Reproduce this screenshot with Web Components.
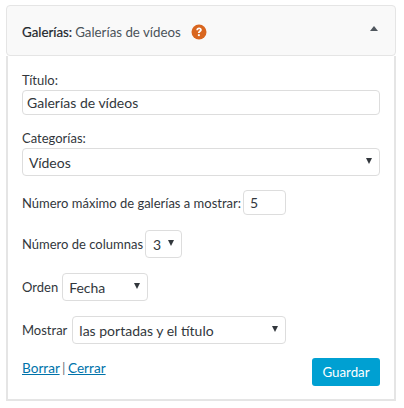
<!DOCTYPE html>
<html lang="es">
<head>
<meta charset="utf-8">
<title>Galerías</title>
<style>
  html, body { margin: 0; background: #fff; }
  body { padding: 5px 0 0 6px; font-family: Lato, "Open Sans", sans-serif; font-size: 13px; color: #32373c; }
</style>
</head>
<body>
<gal-widget heading="Galerías:" title-text="Galerías de vídeos">
  <gal-row stack gap="1" bottom="14">
    <span>Título:</span>
    <gal-box full height="25" pad="4">Galerías de vídeos</gal-box>
  </gal-row>
  <gal-row stack gap="1" bottom="14">
    <span>Categorías:</span>
    <gal-box full height="28" pad="6" arrow>Vídeos</gal-box>
  </gal-row>
  <gal-row gap="2" bottom="15">
    <span>Número máximo de galerías a mostrar:</span>
    <gal-box width="43" height="25" pad="6">5</gal-box>
  </gal-row>
  <gal-row gap="2" bottom="15">
    <span>Número de columnas</span>
    <gal-box width="37" height="28" pad="7" arrow>3</gal-box>
  </gal-row>
  <gal-row gap="4" bottom="15">
    <span>Orden</span>
    <gal-box width="86" height="28" pad="6" arrow>Fecha</gal-box>
  </gal-row>
  <gal-row gap="5" bottom="14">
    <span>Mostrar</span>
    <gal-box width="214" height="28" pad="6" arrow>las portadas y el título</gal-box>
  </gal-row>
  <gal-actions></gal-actions>
</gal-widget>

<script>
  // Widget frame: header bar with the toggle, body slot below
  class GalWidget extends HTMLElement {
    constructor() {
      super();
      const template = document.createElement( 'template' );
      template.innerHTML = /* template */ `
        <style>
          :host {
            box-sizing: border-box;
            display: block;
            width: 390px;
          }
          header {
            align-items: center;
            background: #f9f9f9;
            border: 1px solid #e5e5e5;
            border-radius: 4px;
            box-sizing: border-box;
            display: flex;
            font-size: 13.3px;
            height: 51px;
            padding: 2px 17px 0 15px;
          }
          strong { color: #23282d; font-weight: 400; -webkit-text-stroke: 0.2px #23282d; }
          .name { color: #4b5359; margin-left: 3px; }
          svg.help { margin-left: 10px; }
          svg.toggle { margin-left: auto; margin-top: -7px; }
          main {
            border: 2px solid #e5e5e5;
            border-top: 0;
            box-sizing: border-box;
            height: 345px;
            padding: 15px 14px 0 14px;
          }
        </style>
        <header>
          <strong></strong><span class="name"></span>
          <svg class="help" width="16" height="16" viewBox="0 0 16 16">
            <circle cx="8" cy="8" r="7.5" fill="#d9661f"/>
            <path d="M5.3 6.2c0-1.7 1.2-2.7 2.8-2.7s2.7 1 2.7 2.3c0 1-.5 1.6-1.3 2.1-.6.4-.8.6-.8 1.2H6.9c0-1.1.4-1.7 1.1-2.2.6-.4.9-.6.9-1.1 0-.4-.3-.7-.8-.7-.6 0-.9.4-.9 1.1z" fill="#fff"/>
            <rect x="6.9" y="10.2" width="1.9" height="1.9" fill="#fff"/>
          </svg>
          <svg class="toggle" width="8" height="5" viewBox="0 0 8 5"><path d="M4 0 8 5H0z" fill="#50575e"/></svg>
        </header>
        <main><slot></slot></main>
      `;
      this.attachShadow( {mode: 'open'} );
      this.shadowRoot.appendChild( template.content.cloneNode( true ) );
      this.shadowRoot.querySelector( 'strong' ).textContent = this.getAttribute( 'heading' );
      this.shadowRoot.querySelector( '.name' ).textContent = this.getAttribute( 'title-text' );
    }
  }

  // One form line, label beside the control or stacked on it
  class GalRow extends HTMLElement {
    constructor() {
      super();
      const template = document.createElement( 'template' );
      template.innerHTML = /* template */ `
        <style>
          :host {
            align-items: center;
            display: flex;
            line-height: 18px;
          }
          :host( [stack] ) {
            align-items: stretch;
            flex-direction: column;
          }
        </style>
        <slot></slot>
      `;
      this.attachShadow( {mode: 'open'} );
      this.shadowRoot.appendChild( template.content.cloneNode( true ) );
    }

    connectedCallback() {
      this.style.gap = `${this.getAttribute( 'gap' ) || 0}px`;
      this.style.marginBottom = `${this.getAttribute( 'bottom' ) || 0}px`;
    }
  }

  // Text input or select look, arrow attribute makes it a select
  class GalBox extends HTMLElement {
    constructor() {
      super();
      const template = document.createElement( 'template' );
      template.innerHTML = /* template */ `
        <style>
          :host {
            align-items: center;
            background: #fff;
            border: 1px solid #ddd;
            border-radius: 4px;
            box-sizing: border-box;
            color: #32373c;
            display: flex;
            flex: none;
            font-size: 14px;
          }
          :host( [full] ) { width: 358px; }
          svg { display: none; flex: none; margin-left: auto; margin-right: 7px; margin-top: -3px; }
          :host( [arrow] ) svg { display: block; }
          :host( [arrow] ) span { padding-top: 2px; }
          span { white-space: nowrap; }
        </style>
        <span><slot></slot></span>
        <svg width="6" height="6" viewBox="0 0 6 6"><path d="M0 0h6L3 6z" fill="#32373c"/></svg>
      `;
      this.attachShadow( {mode: 'open'} );
      this.shadowRoot.appendChild( template.content.cloneNode( true ) );
    }

    connectedCallback() {
      if( this.hasAttribute( 'width' ) ) {
        this.style.width = `${this.getAttribute( 'width' )}px`;
      }
      this.style.height = `${this.getAttribute( 'height' )}px`;
      this.style.paddingLeft = `${this.getAttribute( 'pad' )}px`;
    }
  }

  // Delete and close links plus the save button
  class GalActions extends HTMLElement {
    constructor() {
      super();
      const template = document.createElement( 'template' );
      template.innerHTML = /* template */ `
        <style>
          :host {
            align-items: flex-start;
            display: flex;
            justify-content: space-between;
            width: 358px;
          }
          .links { color: #72777c; font-size: 13.6px; line-height: 18px; padding-top: 1px; word-spacing: -1px; }
          a { color: #0073aa; text-decoration: underline; }
          button {
            background: #00a0d2;
            border: 0;
            border-radius: 3px;
            color: #fff;
            font: inherit;
            font-size: 13.3px;
            height: 28px;
            padding: 0;
            width: 68px;
          }
        </style>
        <div class="links"><a href="#">Borrar</a> | <a href="#">Cerrar</a></div>
        <button type="button">Guardar</button>
      `;
      this.attachShadow( {mode: 'open'} );
      this.shadowRoot.appendChild( template.content.cloneNode( true ) );
    }
  }

  window.customElements.define( 'gal-widget', GalWidget );
  window.customElements.define( 'gal-row', GalRow );
  window.customElements.define( 'gal-box', GalBox );
  window.customElements.define( 'gal-actions', GalActions );
</script>
</body>
</html>
